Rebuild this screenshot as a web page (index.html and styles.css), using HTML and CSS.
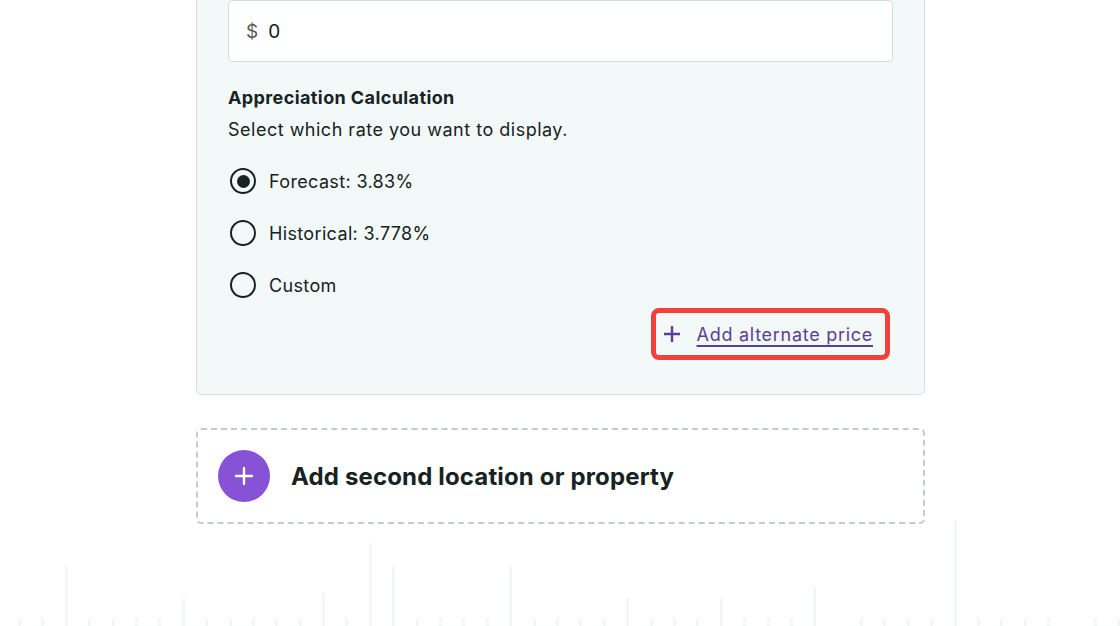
FILE: index.html
```html
<!DOCTYPE html>
<html lang="en">
<head>
<meta charset="utf-8">
<title>Appreciation</title>
<link rel="stylesheet" href="styles.css">
</head>
<body>
<div class="bg-bars" aria-hidden="true">
  <span class="bar"></span><span class="bar"></span><span class="bar h61"></span><span class="bar"></span><span class="bar"></span><span class="bar"></span><span class="bar"></span><span class="bar h28"></span><span class="bar"></span><span class="bar"></span><span class="bar"></span><span class="bar"></span><span class="bar"></span><span class="bar h33"></span><span class="bar"></span><span class="bar h83"></span><span class="bar h60"></span><span class="bar"></span><span class="bar"></span><span class="bar"></span><span class="bar"></span><span class="bar h60"></span><span class="bar"></span><span class="bar"></span><span class="bar"></span><span class="bar"></span><span class="bar h28"></span><span class="bar"></span><span class="bar"></span><span class="bar"></span><span class="bar h28"></span><span class="bar"></span><span class="bar"></span><span class="bar"></span><span class="bar h40"></span><span class="bar none"></span><span class="bar"></span><span class="bar"></span><span class="bar"></span><span class="bar"></span><span class="bar h106"></span><span class="bar"></span><span class="bar"></span><span class="bar"></span><span class="bar"></span><span class="bar none"></span><span class="bar"></span><span class="bar"></span>
</div>
<main class="column">
  <section class="card">
    <div class="input">
      <span class="prefix">$</span>
      <span class="value">0</span>
    </div>
    <h3 class="heading">Appreciation Calculation</h3>
    <p class="sub">Select which rate you want to display.</p>
    <div class="radios">
      <label class="radio-row"><span class="radio checked"></span><span>Forecast: 3.83%</span></label>
      <label class="radio-row"><span class="radio"></span><span>Historical: 3.778%</span></label>
      <label class="radio-row"><span class="radio"></span><span>Custom</span></label>
    </div>
    <div class="link-row">
      <div class="highlight">
        <a class="alt-link" href="#">
          <svg class="plus" width="18" height="18" viewBox="0 0 18 18"><path d="M9 1v16M1 9h16" stroke="#5b3f93" stroke-width="2.4" fill="none" stroke-linecap="butt"/></svg>
          <span class="alt-text">Add alternate price</span>
        </a>
      </div>
    </div>
  </section>
  <section class="add-box">
    <span class="add-circle">
      <svg width="20" height="20" viewBox="0 0 20 20"><path d="M10 2v16M2 10h16" stroke="#ffffff" stroke-width="2.4" fill="none" stroke-linecap="round"/></svg>
    </span>
    <span class="add-text">Add second location or property</span>
  </section>
</main>
</body>
</html>
```
FILE: styles.css
```css
* { box-sizing: border-box; }
html, body { margin: 0; padding: 0; }
body {
  width: 1120px;
  height: 626px;
  overflow: hidden;
  background: #ffffff;
  font-family: Inter, "Noto Sans", "Liberation Sans", sans-serif;
  color: #172222;
  position: relative;
}
.bg-bars {
  position: absolute;
  left: 18px;
  bottom: 0;
  display: flex;
  align-items: flex-end;
  gap: 20.4px;
  z-index: 0;
}
.bar {
  width: 3px;
  height: 8px;
  background: #f4f7f7;
  display: block;
}
.bar.h28 { height: 28px; }
.bar.h33 { height: 33px; }
.bar.h40 { height: 40px; }
.bar.h60 { height: 60px; }
.bar.h61 { height: 61px; }
.bar.h83 { height: 83px; }
.bar.h106 { height: 106px; }
.bar.none { background: transparent; }

.column {
  position: relative;
  z-index: 1;
  width: 729px;
  margin-left: 196px;
  margin-top: -33px;
  display: flex;
  flex-direction: column;
}
.card {
  background: #f3f8f8;
  border: 1px solid #d6dfdf;
  border-radius: 5px;
  padding: 32px 31px 34px 31px;
  display: flex;
  flex-direction: column;
}
.input {
  height: 62px;
  background: #ffffff;
  border: 1px solid #d6dddd;
  border-radius: 4px;
  display: flex;
  align-items: center;
  padding-left: 17px;
  gap: 10px;
  font-size: 19px;
}
.prefix { color: #555c5c; }
.value { color: #111a1a; }
.heading {
  margin: 24px 0 0;
  font-size: 18px;
  line-height: 24px;
  font-weight: 700;
  letter-spacing: 0.4px;
}
.sub {
  margin: 8px 0 0;
  font-size: 18px;
  line-height: 24px;
  letter-spacing: 0.5px;
}
.radios {
  margin-top: 25px;
  display: flex;
  flex-direction: column;
  gap: 24px;
}
.radio-row {
  display: flex;
  align-items: center;
  gap: 13px;
  height: 28px;
  padding-left: 2px;
  font-size: 18px;
  letter-spacing: 0.35px;
}
.radio {
  width: 26px;
  height: 26px;
  border: 2.5px solid #172222;
  border-radius: 50%;
  display: flex;
  align-items: center;
  justify-content: center;
}
.radio.checked::after {
  content: "";
  width: 13px;
  height: 13px;
  border-radius: 50%;
  background: #172222;
}
.link-row {
  margin-top: 9px;
  display: flex;
  justify-content: flex-end;
  padding-right: 3px;
}
.highlight {
  border: 5px solid #f2403a;
  border-radius: 8px;
  height: 52px;
  padding: 0 12px 0 7px;
  display: flex;
  align-items: center;
}
.alt-link {
  display: flex;
  align-items: center;
  gap: 16px;
  text-decoration: none;
  color: #5b3f93;
}
.alt-text {
  font-size: 18px;
  text-decoration: underline;
  text-underline-offset: 4px;
  text-decoration-thickness: 1.5px;
  letter-spacing: 0.72px;
}
.add-box {
  margin-top: 33px;
  height: 96px;
  border: 2px dashed #c5cbcb;
  border-radius: 5px;
  background: #ffffff;
  display: flex;
  align-items: center;
  padding-left: 20px;
  gap: 21px;
}
.add-circle {
  width: 52px;
  height: 52px;
  border-radius: 50%;
  background: #8752d6;
  display: flex;
  align-items: center;
  justify-content: center;
}
.add-text {
  font-size: 24px;
  font-weight: 700;
  letter-spacing: 0.15px;
}
```
